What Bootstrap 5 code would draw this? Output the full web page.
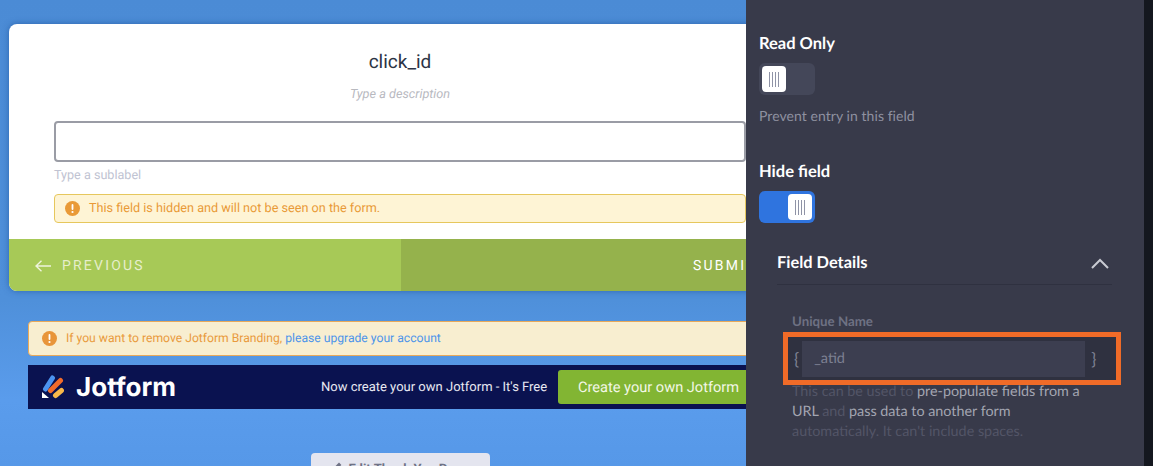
<!doctype html>
<html lang="en"><head><meta charset="utf-8"><title>click_id</title>
<link href="https://cdn.jsdelivr.net/npm/bootstrap@5.3.0/dist/css/bootstrap.min.css" rel="stylesheet">
<style>
html,body{height:466px;overflow:hidden;background:#14171f}
.stage{height:466px;width:1153px;text-rendering:geometricPrecision}
.preview{width:746px;flex:none;overflow:hidden;height:466px;padding:24px 0 0 9px;font-family:Roboto,sans-serif;background:linear-gradient(180deg,#4b8bd5 0,#4f90da 300px,#5a9cec 400px,#5698e8 466px)}
.form-sheet{width:782px;height:267px;border-radius:8px;background:#fff;overflow:hidden;box-shadow:0 0 6px rgba(20,70,140,.55)}
.sheet-body{padding:0 45px;height:215px}
.sheet-title{font-size:19px;line-height:24px;color:#2c3345;padding-top:26px;text-align:center}
.sheet-desc{font-size:12.7px;line-height:18px;color:#b8b9bf;font-style:italic;text-align:center;margin-top:12px}
.field-box{height:41px;margin-top:17px;border:2px solid #9a9ca5;border-radius:4px}
.sublabel{font-size:12.6px;line-height:16px;color:#c0c3d2;margin-top:6px}
.hidden-note{height:29px;margin-top:10px;border:1px solid #e6c75d;border-radius:4px;background:#fef4d5;color:#e99a37;font-size:12.65px;padding-left:10px;gap:9px}
.hidden-note span{padding-top:2px}
.sheet-foot{height:52px;font-size:14px;letter-spacing:2.2px}
.foot-prev{width:392px;background:#a7c957;padding:2px 0 0 26px;gap:11px;color:#e6eecb}
.foot-next{width:390px;background:#95b24c;padding:2px 0 0 292px;color:#fff}
.brand-note{width:760px;height:35px;margin:30px 0 0 19px;border:1px solid #e8a95a;border-radius:4px;background:#f8eed0;color:#e99a3d;font-size:12.15px;padding-left:13px;gap:9px}
.brand-note a{color:#4c94ea;text-decoration:none}
.brand-bar{width:760px;height:44px;margin:9px 0 0 19px;background:#0a1250;color:#e8e9f2;padding-left:13px}
.brand-word{font-family:Inter,sans-serif;font-weight:700;font-size:26px;color:#fff;margin-left:12px;width:245px;flex:none}
.brand-text{font-size:13px;width:237px;flex:none;white-space:nowrap;padding-top:2px}
.brand-btn{width:221px;flex:none;height:34px;background:#82b533;color:#f2f7e6;border-radius:3px;font-size:14.6px;padding:2px 0 0 20px;white-space:nowrap}
.edit-tab{width:179px;height:20px;margin:44px 0 0 302px;background:#e4e5ef;border-radius:4px 4px 0 0;color:#6f7285;font-size:13px;font-weight:700;padding-top:7px;gap:5px;white-space:nowrap}
.panel{width:398px;flex:none;height:466px;background:#383a4a;padding:0 0 0 13px;font-family:Lato,sans-serif;overflow:hidden}
.opt-title{font-size:16.5px;font-weight:700;color:#fff;line-height:20px;margin-top:35px}
.opt-title.first{margin-top:33px}
.switcher{width:56px;height:32px;border-radius:6px;margin-top:10px;padding:3px}
.switcher.off{background:#444759}
.switcher.on{background:#2f74df;justify-content:flex-end}
.knob{width:24px;height:26px;background:#fff;border-radius:4px;gap:2px}
.knob i{display:block;width:1px;height:15px;background:#8f93a6}
.opt-hint{font-size:14px;color:#8f91a0;line-height:20px;margin-top:11px;letter-spacing:.06px}
.detail-head{margin:22px 32px 0 18px;height:40px;border-bottom:1px solid #2f3140;padding:0 3px 2px 0}
.detail-head span{font-size:16.4px;font-weight:700;color:#fff}
.uniq-label{font-size:13.3px;font-weight:700;color:#6e7183;margin:27px 0 0 33px;line-height:18px}
.uniq-box{width:338px;height:53px;margin:2px 0 0 24px;border:5px solid #f06b28;background:#2f3140;color:#7d8092;font-size:17px;padding:4px 0 4px 6px}
.uniq-input{width:283px;height:36px;background:#3c3e50;font-size:14.5px;padding-left:12px;color:#7d8092;margin:0 6px 0 3px;flex:none}
.uniq-help{margin:-3px 0 0 33px;width:300px;font-size:14.35px;line-height:20px;color:#a3a5b1}
.uniq-help em{font-style:normal;color:#535567}
.edge{flex:1;background:#14171f}
</style></head><body>
<div class="stage d-flex">
 <div class="preview">
  <div class="form-sheet">
   <div class="sheet-body">
    <div class="sheet-title">click_id</div>
    <div class="sheet-desc">Type a description</div>
    <div class="field-box"></div>
    <div class="sublabel">Type a sublabel</div>
    <div class="hidden-note d-flex align-items-center">
     <svg width="15" height="15" viewBox="0 0 15 15"><circle cx="7.5" cy="7.5" r="7.5" fill="#e99a37"/><rect x="6.6" y="3" width="1.8" height="6" rx=".9" fill="#fff"/><circle cx="7.5" cy="11" r="1.1" fill="#fff"/></svg>
     <span>This field is hidden and will not be seen on the form.</span>
    </div>
   </div>
   <div class="sheet-foot d-flex">
    <div class="foot-prev d-flex align-items-center">
     <svg width="16" height="12" viewBox="0 0 16 12" fill="none" stroke="#eef3dc" stroke-width="1.4"><path d="M16 6H1M6.500.8 1 6l5.500 5.200"/></svg>
     <span>PREVIOUS</span>
    </div>
    <div class="foot-next d-flex align-items-center"><span>SUBMIT</span></div>
   </div>
  </div>
  <div class="brand-note d-flex align-items-center">
   <svg width="15" height="15" viewBox="0 0 15 15"><circle cx="7.500" cy="7.500" r="7.500" fill="#e8953a"/><rect x="6.600" y="3" width="1.800" height="6" rx=".9" fill="#fff"/><circle cx="7.500" cy="11" r="1.100" fill="#fff"/></svg>
   <span>If you want to remove Jotform Branding, <a href="#">please upgrade your account</a></span>
  </div>
  <div class="brand-bar d-flex align-items-center">
   <svg width="23" height="25" viewBox="0 0 23 25" fill="none" stroke-width="5" stroke-linecap="round"><path d="M1 17v6h7z" fill="#fff"/><path d="M4.500 14 11.500 3" stroke="#4c94f0"/><path d="M9.500 15.500 19.500 5.500" stroke="#f06b2b"/><path d="M14.500 20.500 20.500 15.500" stroke="#f7b84a"/></svg>
   <span class="brand-word">Jotform</span>
   <span class="brand-text">Now create your own Jotform - It's Free</span>
   <span class="brand-btn d-flex align-items-center">Create your own Jotform</span>
  </div>
  <div class="edit-tab d-flex justify-content-center">
   <svg width="11" height="12" viewBox="0 0 11 12" fill="#6f7285"><path d="M1 11l.6-3L7 2.500l2.400 2.400L4 10.400z"/></svg>
   <span>Edit Thank You Page</span>
  </div>
 </div>
 <div class="panel">
  <div class="opt-title first">Read Only</div>
  <div class="switcher off d-flex"><div class="knob d-flex align-items-center justify-content-center"><i></i><i></i><i></i><i></i></div></div>
  <div class="opt-hint">Prevent entry in this field</div>
  <div class="opt-title">Hide field</div>
  <div class="switcher on d-flex"><div class="knob d-flex align-items-center justify-content-center"><i></i><i></i><i></i><i></i></div></div>
  <div class="detail-head d-flex align-items-center justify-content-between">
   <span>Field Details</span>
   <svg width="18" height="11" viewBox="0 0 18 11" fill="none" stroke="#c9cbd3" stroke-width="2"><path d="M1 10l8-8 8 8"/></svg>
  </div>
  <div class="uniq-label">Unique Name</div>
  <div class="uniq-box d-flex align-items-center">
   <span>{</span><div class="uniq-input d-flex align-items-center">_atid</div><span>}</span>
  </div>
  <div class="uniq-help"><em>This can be used to</em> pre-populate fields from a URL <em>and</em> pass data to another form <em>automatically. It can't include spaces.</em></div>
 </div>
 <div class="edge"></div>
</div>
</body></html>
